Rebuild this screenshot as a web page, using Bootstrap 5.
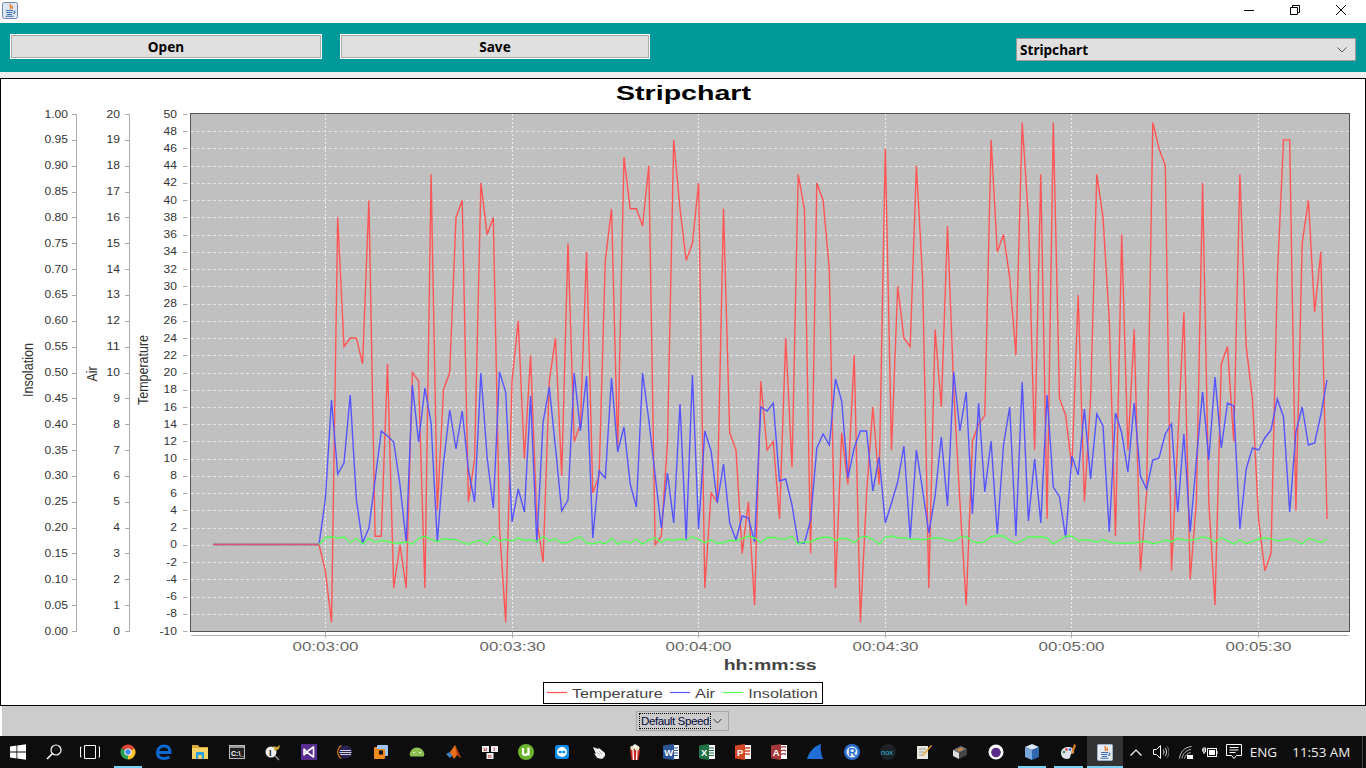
<!DOCTYPE html>
<html lang="en">
<head>
<meta charset="utf-8">
<title>Stripchart</title>
<link rel="stylesheet" href="https://cdn.jsdelivr.net/npm/bootstrap@5.3.0/dist/css/bootstrap.min.css">
<style>
html,body{margin:0;height:768px;overflow:hidden;background:#eee}
.app-root{width:1366px;height:768px}
.title-strip{height:23px;background:#fff;flex:none}
.app-ico{margin:2px 0 0 2px}
.win-ctl{width:46px;height:20px}
.win-group{margin-right:2px}
.tool-strip{height:49px;background:#009999;flex:none;padding:11px 10px 0 11px}
.tool-btn{width:310px;height:23px;margin:1px 0 0;padding:1px 0 0;border:1px solid #aaa;border-radius:0;box-shadow:0 0 0 1px #fff;background:#e0e0e0;color:#000;font:700 13.6px/20px "Noto Sans",sans-serif}
.tool-btn:hover{background:#e0e0e0;color:#000;border-color:#aaa}
.tool-btn+.tool-btn{margin-left:20px;width:308px}
.view-combo{width:340px;height:23px;margin-top:4px;border:1px solid #999;background:#e0e0e0;font:700 13.6px/21px "Noto Sans",sans-serif;color:#000;padding:0 8px 0 3px}
.strip-gap{height:6px;flex:none;background:#eee}
.chart-panel{height:628px;flex:none;background:#fff;border:1px solid #000;line-height:0}
.speed-strip{height:30px;flex:none;background:#ccc;border-left:2px solid #fff}
.speed-box{width:93px;height:20px;flex:none;margin-left:-3px;border:1px solid #a6a6a6;padding:0 6px 0 2px;font:11.6px/14px "Liberation Sans",sans-serif;color:#000;white-space:nowrap;letter-spacing:-.42px}
.speed-text{border:1px dotted #000;padding:0 1px;line-height:14px;color:#00083a}
.speed-box svg{flex:none}
.task-strip{height:32px;flex:none;background:#0d0d0d;color:#fff}
.task-cell{width:36.18px;height:32px;flex:none;position:relative}
.task-cell.on::after{content:"";position:absolute;left:4px;right:4px;bottom:0;height:2px;background:#76d2f5}
.task-cell.wide-on::after{left:0;right:0}
.task-cell.cur{background:#333}
.view-cell{margin-right:1.5px}
.tray-cell{height:32px;flex:none}
.w26{width:26px}.w25{width:25px}.w23{width:23px}.w24{width:24px}.w35{width:35px}.w81{width:81px}
.tray-txt{font:13.4px/32px "Open Sans",sans-serif;color:#eee}
.desk-edge{width:4px;height:32px;flex:none;border-left:1px solid #444}
.chart-svg text{font-family:"Liberation Sans",sans-serif}
.lab{font-size:10px;fill:#333}
.xlab{font-size:13px;fill:#666}
.axtitle{font-size:14px;fill:#333}
.chart-head{font-size:20px;font-weight:700;fill:#000}
.xhead{font-size:14px;font-weight:700;fill:#444}
.legtxt{font-size:12.5px;fill:#444}
.task-svg text{font-family:"Liberation Sans",sans-serif;font-weight:700}
.task-svg .nox-txt{font-weight:400}
</style>
</head>
<body>
<div class="app-root d-flex flex-column">

  <div class="title-strip d-flex align-items-start justify-content-between">
    <svg class="app-ico" width="16" height="17" viewBox="0 0 16 17"><rect x=".5" y=".5" width="15" height="16" rx="2" fill="#dfe8f2" stroke="#6d88ad"/><path d="M8.5 2C7 4 10 4.500 8 7M10.500 3.500C9.500 5 11 5.500 10 7" fill="none" stroke="#e8761a" stroke-width="1.300"/><path d="M4 8.500h7M4 10.500h6.500M5 12.500h5M3.500 14.300h8M11.500 9c2 0 2 2.500-.5 2.500" fill="none" stroke="#3a6ea8" stroke-width="1.100"/></svg>
    <div class="d-flex win-group">
      <div class="win-ctl d-flex align-items-center justify-content-center"><svg width="12" height="12" viewBox="0 0 12 12"><path d="M1 6.500h10" stroke="#000" stroke-width="1"/></svg></div>
      <div class="win-ctl d-flex align-items-center justify-content-center"><svg width="12" height="12" viewBox="0 0 12 12"><path d="M1.500 3.500h7v7h-7zM3.500 3.500v-2h7v7h-2" fill="none" stroke="#000"/></svg></div>
      <div class="win-ctl d-flex align-items-center justify-content-center"><svg width="12" height="12" viewBox="0 0 12 12"><path d="M1 1l10 10M11 1L1 11" stroke="#000" fill="none"/></svg></div>
    </div>
  </div>

  <div class="tool-strip d-flex align-items-start">
    <button class="btn tool-btn" type="button">Open</button>
    <button class="btn tool-btn" type="button">Save</button>
    <div class="view-combo ms-auto d-flex align-items-center justify-content-between">
      <span>Stripchart</span>
      <svg width="10" height="6" viewBox="0 0 10 6"><path d="M.5.5L5 5 9.500.5" fill="none" stroke="#555"/></svg>
    </div>
  </div>

  <div class="strip-gap"></div>

  <div class="chart-panel">
    <svg class="chart-svg" id="chart" width="1364" height="626" viewBox="1 79 1364 626"></svg>
  </div>

  <div class="speed-strip d-flex align-items-center justify-content-center">
    <div class="speed-box d-flex align-items-center justify-content-between">
      <span class="speed-text">Default Speed</span>
      <svg width="9" height="6" viewBox="0 0 9 6"><path d="M.5 1L4.500 5 8.500 1" fill="none" stroke="#333"/></svg>
    </div>
  </div>

  <div class="task-strip d-flex align-items-center">
    <div class="task-cell d-flex align-items-center justify-content-center"><svg width="16" height="16" viewBox="0 0 16 16"><path fill="#fff" d="M0 2.500l6.500-.9v6H0zM7.300 1.500L16 .3v7.300H7.300zM0 8.400h6.500v6L0 13.500zM7.300 8.400H16v7.300l-8.700-1.200z"/></svg></div>
    <div class="task-cell d-flex align-items-center justify-content-center"><svg width="16" height="16" viewBox="0 0 16 16"><circle cx="10" cy="6" r="5" fill="none" stroke="#fff" stroke-width="1.200"/><path d="M6.400 9.600L1 15" stroke="#fff" stroke-width="1.500"/></svg></div>
    <div class="task-cell view-cell d-flex align-items-center justify-content-center"><svg width="20" height="16" viewBox="0 0 20 16"><path d="M4.500 1.500h11v13h-11zM1.500 3H.5v10h1M18.500 3h1v10h-1" fill="none" stroke="#fff"/></svg></div>
    <div class="task-cell on d-flex align-items-center justify-content-center"><svg width="16" height="16" viewBox="0 0 16 16"><path fill="#db4437" d="M8 8L1.500 4.250A7.500 7.500 0 0 1 14.500 4.250z"/><path fill="#fbc02d" d="M8 8L14.500 4.250A7.500 7.500 0 0 1 8 15.500z"/><path fill="#2e9e4f" d="M8 8L8 15.500A7.500 7.500 0 0 1 1.500 4.250z"/><circle cx="8" cy="8" r="3.600" fill="#fff"/><circle cx="8" cy="8" r="2.700" fill="#4285f4"/></svg></div>
    <div class="task-cell d-flex align-items-center justify-content-center"><svg width="16" height="16" viewBox="0 0 16 16"><path d="M2.500 8.500H14C14 4 11.500 2 8 2 4 2 1.500 5 1.500 9c0 4 3 5.500 6.500 5.500 2 0 4-.5 5.500-1.500" fill="none" stroke="#0a68d0" stroke-width="3"/></svg></div>
    <div class="task-cell d-flex align-items-center justify-content-center"><svg width="16" height="16" viewBox="0 0 16 16"><path fill="#d9a93a" d="M0 1h6l1.500 2H16v3H0z"/><path fill="#f6d365" d="M0 4h16v11H0z"/><path fill="#2a9fe0" d="M4 8h8v7H9.800v-4H6.200v4H4z"/></svg></div>
    <div class="task-cell d-flex align-items-center justify-content-center"><svg class="task-svg" width="16" height="16" viewBox="0 0 16 16"><rect x=".5" y="1.500" width="15" height="13" fill="#222" stroke="#bbb"/><rect x="1" y="2" width="14" height="2" fill="#999"/><text x="2" y="12" font-size="7" fill="#fff">C:\_</text></svg></div>
    <div class="task-cell d-flex align-items-center justify-content-center"><svg class="task-svg" width="16" height="17" viewBox="0 0 16 17"><circle cx="6" cy="8" r="5.500" fill="#eee"/><path d="M8 2l4 1 3-2-1 4-4 2z" fill="#c8a52e"/><text x="4" y="12" font-size="9" fill="#222">I</text><path d="M10 12l4 4" stroke="#999" stroke-width="1.500"/></svg></div>
    <div class="task-cell d-flex align-items-center justify-content-center"><svg width="16" height="16" viewBox="0 0 16 16"><rect width="16" height="16" fill="#5c2d91"/><path d="M3 5v6l2.500-3zM12.500 3v10L5.500 8z" fill="none" stroke="#fff" stroke-width="1.600" stroke-linejoin="round"/></svg></div>
    <div class="task-cell d-flex align-items-center justify-content-center"><svg width="16" height="16" viewBox="0 0 16 16"><circle cx="8.500" cy="8" r="6.500" fill="#2c2255"/><path d="M3 6.500h11M2.500 8.500h12M3 10.500h11" stroke="#fff" stroke-width=".8"/><path d="M4.500 1.500A7.500 7.500 0 0 0 4.500 14.500" fill="none" stroke="#e58a1c" stroke-width="1.100"/></svg></div>
    <div class="task-cell d-flex align-items-center justify-content-center"><svg width="16" height="16" viewBox="0 0 16 16"><rect x="1" y="3" width="11" height="12" rx="1" fill="#f08a1d"/><rect x="4" y="1" width="11" height="11" rx="1" fill="#9cc6ef"/><rect x="4" y="5" width="8" height="7" fill="#f08a1d"/><rect x="6" y="6.500" width="4" height="4" fill="#111"/></svg></div>
    <div class="task-cell d-flex align-items-center justify-content-center"><svg width="16" height="16" viewBox="0 0 16 16"><path fill="#8cc152" d="M.5 11a7.500 7.500 0 0 1 15 0z"/><rect x="1" y="10" width="14" height="2.500" rx="1" fill="#8cc152"/><circle cx="5" cy="8.500" r=".8" fill="#fff"/><circle cx="11" cy="8.500" r=".8" fill="#fff"/></svg></div>
    <div class="task-cell d-flex align-items-center justify-content-center"><svg width="16" height="16" viewBox="0 0 16 16"><path fill="#3f7fc0" d="M0 10l4-2 3 3-3 3z"/><path fill="#e8701a" d="M4 8l5-7 6 13-4-3-3 4z"/><path fill="#b8360f" d="M9 1l6 13-4-3z"/></svg></div>
    <div class="task-cell d-flex align-items-center justify-content-center"><svg class="task-svg" width="16" height="16" viewBox="0 0 16 16"><rect x="0" y="2" width="7" height="6" fill="#eee"/><rect x="9" y="2" width="7" height="6" fill="#eee"/><rect x="4.500" y="9" width="7" height="6" fill="#eee"/><text x="1.500" y="7" font-size="6" fill="#c33">u</text><text x="11.500" y="7" font-size="6" fill="#c33">i</text><text x="6" y="14" font-size="6" fill="#c33">n</text></svg></div>
    <div class="task-cell d-flex align-items-center justify-content-center"><svg width="16" height="16" viewBox="0 0 16 16"><circle cx="8" cy="8" r="8" fill="#6cb52d"/><path d="M5 4v5c0 2.500 4.500 2.500 4.500 0M10.500 3.500v8" fill="none" stroke="#fff" stroke-width="2.200"/></svg></div>
    <div class="task-cell d-flex align-items-center justify-content-center"><svg width="16" height="16" viewBox="0 0 16 16"><rect x="1" y="1" width="14" height="14" rx="3" fill="#0e8ee9"/><circle cx="8" cy="8" r="5" fill="#fff"/><path d="M4 8l2.500-2v1.300h3V6L12 8l-2.500 2V8.700h-3V10z" fill="#0e8ee9"/></svg></div>
    <div class="task-cell d-flex align-items-center justify-content-center"><svg width="16" height="16" viewBox="0 0 16 16"><path fill="#f4f4f4" d="M3 3l5 2 1-1 6 5v3l-3 3-5-1-3-5 2 1z"/><path d="M7 8l3 3M9 7l3 3" stroke="#888" stroke-width=".6"/></svg></div>
    <div class="task-cell d-flex align-items-center justify-content-center"><svg width="16" height="16" viewBox="0 0 16 16"><path fill="#c62828" d="M3 6h10l-1.500 10h-7z"/><path d="M6 6l.5 10M10 6l-.5 10" stroke="#fff" stroke-width="1.300"/><circle cx="5.500" cy="4" r="2.300" fill="#f3e3c3"/><circle cx="10" cy="4" r="2.500" fill="#f3e3c3"/><circle cx="8" cy="2.200" r="2" fill="#fff"/></svg></div>
    <div class="task-cell d-flex align-items-center justify-content-center"><svg class="task-svg" width="16" height="16" viewBox="0 0 16 16"><path fill="#fff" d="M9 1h7v14H9z"/><path d="M10 4h5M10 6.500h5M10 9h5M10 11.500h5" stroke="#2b579a"/><path fill="#2b579a" d="M0 1.500L11 0v16L0 14.500z"/><text x="1.200" y="11.500" font-size="9.500" fill="#fff">W</text></svg></div>
    <div class="task-cell d-flex align-items-center justify-content-center"><svg class="task-svg" width="16" height="16" viewBox="0 0 16 16"><path fill="#fff" d="M9 1h7v14H9z"/><path d="M10 4h5M10 6.500h5M10 9h5M10 11.500h5" stroke="#207245"/><path fill="#207245" d="M0 1.500L10 0v16L0 14.500z"/><text x="2" y="11.500" font-size="9.500" fill="#fff">X</text></svg></div>
    <div class="task-cell d-flex align-items-center justify-content-center"><svg class="task-svg" width="16" height="16" viewBox="0 0 16 16"><path fill="#fff" d="M9 1h7v14H9z"/><path d="M10 4h5M10 7h5M10 10h5" stroke="#d24726" stroke-width="1.500"/><path fill="#d24726" d="M0 1.500L10 0v16L0 14.500z"/><text x="2" y="11.500" font-size="9.500" fill="#fff">P</text></svg></div>
    <div class="task-cell d-flex align-items-center justify-content-center"><svg class="task-svg" width="16" height="16" viewBox="0 0 16 16"><path fill="#fff" d="M9 1h7v14H9z"/><path d="M10 3.500c2-1 4-1 5 0M10 7c2-1 4-1 5 0M10 10.500c2-1 4-1 5 0" stroke="#a4373a" fill="none" stroke-width="1.300"/><path fill="#a4373a" d="M0 1.500L10 0v16L0 14.500z"/><text x="1.800" y="11.500" font-size="9.500" fill="#fff">A</text></svg></div>
    <div class="task-cell d-flex align-items-center justify-content-center"><svg width="16" height="16" viewBox="0 0 16 16"><path fill="#1f6fd6" d="M0 15C2 8 7 2 14 0c-1 5 0 10 2 15z"/></svg></div>
    <div class="task-cell d-flex align-items-center justify-content-center"><svg class="task-svg" width="16" height="16" viewBox="0 0 16 16"><circle cx="8" cy="8" r="8" fill="#2a6fd0"/><circle cx="8" cy="8" r="5.500" fill="#dce8f6"/><text x="4.300" y="12" font-size="11" fill="#2a6fd0">R</text></svg></div>
    <div class="task-cell d-flex align-items-center justify-content-center"><svg class="task-svg" width="16" height="16" viewBox="0 0 16 16"><circle cx="8" cy="8" r="8" fill="#1d2226"/><text class="nox-txt" x="1" y="10.500" font-size="7.500" fill="#29b6d8">nox</text></svg></div>
    <div class="task-cell d-flex align-items-center justify-content-center"><svg width="16" height="16" viewBox="0 0 16 16"><path fill="#e8e8e0" d="M1 2h11v13H1z"/><path d="M3 5h7M3 8h5M3 11h5" stroke="#999"/><path d="M7 10l8-9 1 1-8 9-2 1z" fill="#e8a020"/></svg></div>
    <div class="task-cell d-flex align-items-center justify-content-center"><svg width="16" height="16" viewBox="0 0 16 16"><path fill="#777" d="M1 6l8-4 6 3-8 4z"/><path fill="#ddd" d="M1 6l6 3v6l-6-3z"/><path fill="#444" d="M7 9l8-4v6l-8 4z"/><path fill="#e08a1e" d="M5 6l4-2 2 1-4 2z"/></svg></div>
    <div class="task-cell d-flex align-items-center justify-content-center"><svg width="16" height="16" viewBox="0 0 16 16"><circle cx="8" cy="8" r="7.500" fill="#fff"/><circle cx="8" cy="8.500" r="4.800" fill="#5b2a86"/></svg></div>
    <div class="task-cell on d-flex align-items-center justify-content-center"><svg width="16" height="16" viewBox="0 0 16 16"><path fill="#dfe9f5" d="M8 0l7 3-7 3-7-3z"/><path fill="#7aa8dc" d="M1 3l7 3v10l-7-3z"/><path fill="#2f69ad" d="M15 3L8 6v10l7-3z"/></svg></div>
    <div class="task-cell on d-flex align-items-center justify-content-center"><svg width="16" height="16" viewBox="0 0 16 16"><path fill="#dfe6f0" d="M0 9c0-4 4-6 7-6 4 0 6 2 6 5 0 2-2 1-3 2-1 2 0 5-4 5-4 0-6-3-6-6z"/><circle cx="3" cy="8" r="1.300" fill="#3f8f3f"/><circle cx="5.500" cy="5.500" r="1.300" fill="#d33"/><circle cx="9" cy="5.500" r="1.300" fill="#36c"/><path d="M13 0l2 1-3 9-2-1z" fill="#e08020"/></svg></div>
    <div class="task-cell cur on wide-on d-flex align-items-center justify-content-center"><svg width="16" height="17" viewBox="0 0 16 17"><rect x=".5" y=".5" width="15" height="16" rx="1" fill="#e7ecf4" stroke="#9db1cc"/><path d="M8.500 2C7 4 10 4.500 8 7M10.500 3.500C9.500 5 11 5.500 10 7" fill="none" stroke="#e8761a" stroke-width="1.300"/><path d="M4 8.500h7M4 10.500h6.500M5 12.500h5M3.500 14.300h8M11.500 9c2 0 2 2.500-.5 2.500" fill="none" stroke="#3a6ea8" stroke-width="1.100"/></svg></div>
    <div class="tray-cell w26 d-flex align-items-center justify-content-center"><svg width="12" height="7" viewBox="0 0 12 7"><path d="M.5 6.500L6 1l5.500 5.500" fill="none" stroke="#fff" stroke-width="1.200"/></svg></div>
    <div class="tray-cell w25 d-flex align-items-center justify-content-center"><svg width="16" height="14" viewBox="0 0 16 14"><path d="M.5 4.500h3l4-4v13l-4-4h-3z" fill="none" stroke="#fff"/><path d="M10 4.500c1.300 1.300 1.300 3.700 0 5M12 3c2 2 2 6 0 8" fill="none" stroke="#ddd"/><path d="M14 1.500c2.600 3 2.600 8 0 11" fill="none" stroke="#777"/></svg></div>
    <div class="tray-cell w25 d-flex align-items-center justify-content-center"><svg width="14" height="13" viewBox="0 0 14 13"><path d="M.5 12.500C1 6 6 1 12.500.5M3 12.500C3.500 8 7.500 4 12 3.500M5.500 12.500C6 10 8.500 7 11.500 6.500" fill="none" stroke="#bbb"/><path d="M8 9h6v4H8z" fill="#fff"/></svg></div>
    <div class="tray-cell w23 d-flex align-items-center justify-content-center"><svg width="16" height="12" viewBox="0 0 16 12"><path d="M0 4h3M1 2v4h2.500V2zM2 6v2" stroke="#fff" fill="none"/><rect x="5.500" y="2.500" width="9" height="8" fill="none" stroke="#fff"/><rect x="7" y="4" width="6" height="5" fill="#fff"/><path d="M15 5v3" stroke="#fff"/></svg></div>
    <div class="tray-cell w24 d-flex align-items-center justify-content-center"><svg width="16" height="16" viewBox="0 0 16 16"><path d="M.5.500h15v11h-5l-2.500 3-2.500-3h-5z" fill="none" stroke="#fff"/><path d="M3.500 3.500h9M3.500 6h9M3.500 8.500h6" stroke="#fff"/></svg></div>
    <div class="tray-cell w35 text-center tray-txt">ENG</div>
    <div class="tray-cell w81 text-center tray-txt">11:53 AM</div>
    <div class="desk-edge"></div>
  </div>
</div>

<script src="https://cdn.jsdelivr.net/npm/bootstrap@5.3.0/dist/js/bootstrap.bundle.min.js"></script>
<script>
const temp=[-3,-9,38,23,24,24,21,40,1,1,21,-5,0,-5,20,19,-5,43,4,18,20,38,40,5,10,42,36,38,2,-9,19,26,10,22,3,-2,19,24,8,35,12,14,34,6,8,33,39,11,45,39,39,37,44,0,1,12,47,39,33,35,42,-5,6,5,39,13,11,-1,5,-7,19,11,12,3,24,9,43,39,-1,42,40,32,-5,13,7,22,-9,6,16,7,46,11,30,24,23,44,31,-5,25,16,37,18,5,-7,12,14,15,47,34,36,31,22,49,38,11,43,3,49,17,15,9,29,5,17,43,38,26,1,36,11,25,-3,6,49,46,44,-3,12,27,-4,5,42,5,-7,21,23,12,43,23,17,3,-3,-1,31,47,47,4,35,40,27,34,3];
const air=[500,400,474,463,395,500,543,528,480,431,436,442,485,542,385,442,388,423,542,463,410,449,411,470,502,373,457,508,372,392,522,489,512,396,543,422,387,448,511,500,373,431,376,538,471,478,378,452,427,484,507,373,420,475,528,473,523,404,540,375,529,431,451,503,464,523,540,516,518,542,407,411,403,481,479,505,543,543,520,448,434,445,379,401,478,448,431,431,491,457,523,503,482,446,538,450,490,533,496,437,506,372,431,392,514,403,492,441,534,445,407,536,382,521,459,523,395,487,497,538,456,475,409,479,414,426,532,413,433,472,403,476,489,460,458,434,424,512,434,532,460,392,460,377,448,403,406,529,469,448,450,438,430,399,417,512,432,407,445,443,415,380];
const sun=[503,500,505,500,518,505,522,505,517,511,514,519,520,515,523,505,499,508,515,506,508,509,517,523,515,510,523,499,513,508,513,504,511,509,515,499,512,507,519,517,507,500,520,521,516,521,505,523,513,519,507,523,510,503,517,507,511,506,511,500,508,518,510,520,518,511,512,506,498,504,518,503,502,506,507,499,522,515,516,507,502,502,512,505,507,518,502,499,508,523,502,498,503,504,508,508,509,506,503,505,511,513,502,499,515,519,515,500,497,498,511,520,512,501,501,500,504,522,510,499,498,513,509,511,517,508,516,519,520,520,518,515,514,521,517,510,515,505,510,511,508,500,505,515,504,512,522,509,521,514,507,504,506,513,509,506,512,522,505,511,518,507];
const X0=325.3,DX=6.222,L=191,R=1349,T=114,B=631;
const yT=v=>B-(v+10)*(B-T)/60;
const xI=i=>X0+DX*i;
const poly=(ys,c)=>`<polyline points="213,544.5 319,544.5 ${ys.map((y,i)=>xI(i).toFixed(1)+','+y.toFixed(1)).join(' ')}" fill="none" stroke="${c}" stroke-width="1.400" stroke-linejoin="miter"/>`;
const txt=(x,y,s,len,anchor,cls,extra='')=>`<text x="${x}" y="${y}" text-anchor="${anchor}" class="${cls}" textLength="${len}" lengthAdjust="spacingAndGlyphs" ${extra}>${s}</text>`;
let h='';
h+=txt(683.5,100,'Stripchart',135,'middle','chart-head');
/* plot */
h+=`<rect x="${L}" y="${T}" width="${R-L}" height="${B-T}" fill="#c0c0c0"/>`;
for(let v=-8;v<=48;v+=2){const y=Math.round(yT(v))+.5;h+=`<line x1="${L}" x2="${R}" y1="${y}" y2="${y}" stroke="#e6e6e6" stroke-dasharray="3 2.500"/>`;}
const xt=[325.5,512.5,698.5,885.5,1071.5,1258.5],xn=['00:03:00','00:03:30','00:04:00','00:04:30','00:05:00','00:05:30'];
xt.forEach((x,i)=>{h+=`<line x1="${x}" x2="${x}" y1="${T}" y2="${B}" stroke="#eeeeee" stroke-dasharray="2 2"/><line x1="${x}" x2="${x}" y1="${B}" y2="638" stroke="#aaa"/>`;h+=txt(x,651,xn[i],66,'middle','xlab');});
h+=`<rect x="${L-.5}" y="${T-.5}" width="${R-L+1}" height="${B-T+1}" fill="none" stroke="#555"/>`;
h+=`<line x1="${L}" x2="${R}" y1="635.500" y2="635.500" stroke="#b4b4b4"/>`;
/* series */
h+=poly(temp.map(yT),'#ff5555');
h+=poly(air,'#5555ff');
h+=poly(sun.map(z=>370+z/3),'#55ff55');
h+=`<line x1="213" x2="319" y1="544.500" y2="544.500" stroke="#dd4f78" stroke-width="1.400"/>`;
/* y axes */
const lenOf=s=>{let n=0;for(const c of s)n+=c==='.'?3.3:c==='-'?4:6.7;return n.toFixed(1);};
const tickG=(x0,x1,y)=>`<line x1="${x0}" x2="${x1}" y1="${y}" y2="${y}" stroke="#aaa"/>`;
for(let k=0;k<=20;k++){
  const y=B-k*(B-T)/20,yy=Math.round(y)+.5;
  h+=tickG(72,76.5,yy);h+=txt(68,(y+3.5).toFixed(1),(k*.05).toFixed(2),lenOf('1.00'),'end','lab');
  h+=tickG(125,129.5,yy);h+=txt(120,(y+3.5).toFixed(1),String(k),lenOf(String(k)),'end','lab');
}
for(let v=-10;v<=50;v+=2){const y=yT(v),yy=Math.round(y)+.5;h+=tickG(183,187.5,yy);h+=txt(177,(y+3.5).toFixed(1),String(v),lenOf(String(v)),'end','lab');}
h+=`<line x1="76.500" x2="76.500" y1="${T}" y2="${B+1}" stroke="#aaa"/><line x1="129.500" x2="129.500" y1="${T}" y2="${B+1}" stroke="#aaa"/>`;
/* axis titles */
h+=txt(33,370,'Insolation',54,'middle','axtitle','transform="rotate(-90 33 370)"');
h+=txt(97,374,'Air',15,'middle','axtitle','transform="rotate(-90 97 374)"');
h+=txt(148,370,'Temperature',70,'middle','axtitle','transform="rotate(-90 148 370)"');
h+=txt(770.2,670,'hh:mm:ss',93,'middle','xhead');
/* legend */
h+=`<rect x="543.500" y="682.500" width="279" height="21" fill="#fff" stroke="#000"/>`;
[[547,567,'#ff5555'],[670,690,'#5555ff'],[723,743,'#55ff55']].forEach(a=>{h+=`<line x1="${a[0]}" x2="${a[1]}" y1="692.500" y2="692.500" stroke="${a[2]}" stroke-width="1.200"/>`;});
h+=txt(572,697.5,'Temperature',90.7,'start','legtxt');
h+=txt(695,697.5,'Air',20,'start','legtxt');
h+=txt(748.3,697.5,'Insolation',69.4,'start','legtxt');
document.getElementById('chart').innerHTML=h;
</script>
</body>
</html>
